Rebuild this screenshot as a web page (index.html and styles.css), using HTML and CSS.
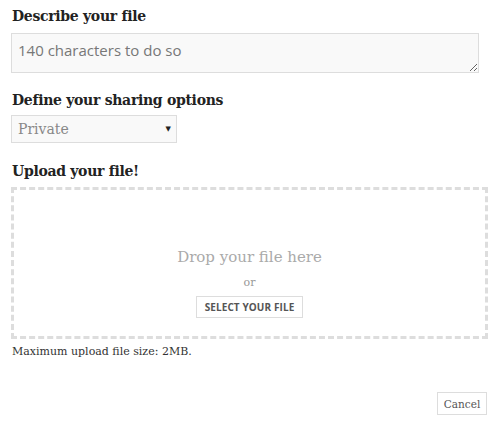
FILE: index.html
```html
<!DOCTYPE html>
<html>
<head>
<meta charset="utf-8">
<link rel="stylesheet" href="styles.css">
</head>
<body>
<form class="form">
  <label class="label">Describe your file</label>
  <textarea class="describe" placeholder="140 characters to do so"></textarea>
  <label class="label label-gap">Define your sharing options</label>
  <div class="select">
    <span class="select-text">Private</span>
    <span class="select-arrow">▼</span>
  </div>
  <label class="label">Upload your file!</label>
  <div class="dropzone">
    <div class="drop-text">Drop your file here</div>
    <div class="drop-or">or</div>
    <button type="button" class="select-btn">Select your file</button>
  </div>
  <p class="max">Maximum upload file size: 2MB.</p>
  <div class="actions">
    <button type="button" class="cancel">Cancel</button>
  </div>
</form>
</body>
</html>
```
FILE: styles.css
```css
html, body {
  margin: 0;
  padding: 0;
  background: #fff;
}
body {
  font-family: "DejaVu Serif", "Liberation Serif", serif;
  color: #222;
}
.form {
  padding: 6px 13px 0 11px;
  display: flex;
  flex-direction: column;
  align-items: flex-start;
}
.label {
  font-weight: bold;
  font-size: 14px;
  letter-spacing: -0.3px;
  color: #222;
  line-height: 20px;
  padding-left: 1px;
}
.describe {
  box-sizing: border-box;
  width: 468px;
  height: 40px;
  margin: 7px 0 17px;
  border: 1px solid #ddd;
  background: #f9f9f9;
  font-family: "Open Sans", sans-serif;
  font-size: 15px;
  padding: 6px 6px;
  resize: vertical;
  color: #555;
}
.describe::placeholder {
  color: #777;
}
.select {
  box-sizing: border-box;
  width: 166px;
  height: 28px;
  margin: 5px 0 18px;
  border: 1px solid #ddd;
  background: #f9f9f9;
  display: flex;
  align-items: center;
  justify-content: space-between;
  padding: 0 5px 0 6px;
}
.select-text {
  font-size: 14px;
  color: #888;
}
.select-arrow {
  font-size: 7px;
  color: #222;
  font-family: "DejaVu Sans", sans-serif;
}
.dropzone {
  box-sizing: border-box;
  width: 477px;
  height: 152px;
  margin-top: 6px;
  border: 3px dashed #ddd;
  display: flex;
  flex-direction: column;
  align-items: center;
  justify-content: flex-start;
  padding-top: 57px;
}
.drop-text {
  font-size: 15px;
  color: #aaa;
  line-height: 20px;
}
.drop-or {
  font-size: 11px;
  line-height: 14px;
  color: #999;
  margin: 9px 0 6px;
}
.select-btn {
  font-family: "Open Sans", sans-serif;
  font-weight: bold;
  font-size: 10px;
  text-transform: uppercase;
  color: #555;
  background: #fff;
  border: 1px solid #ddd;
  padding: 0 8px;
  height: 22px;
  letter-spacing: 0.1px;
}
.max {
  margin: 6px 0 0 1px;
  font-size: 11px;
  line-height: 14px;
  color: #333;
}
.actions {
  align-self: stretch;
  display: flex;
  justify-content: flex-end;
  margin-top: 33px;
}
.cancel {
  font-family: "DejaVu Serif", serif;
  font-size: 10.5px;
  color: #555;
  background: #fff;
  border: 1px solid #ddd;
  height: 23px;
  width: 50px;
  padding: 0;
}
```
